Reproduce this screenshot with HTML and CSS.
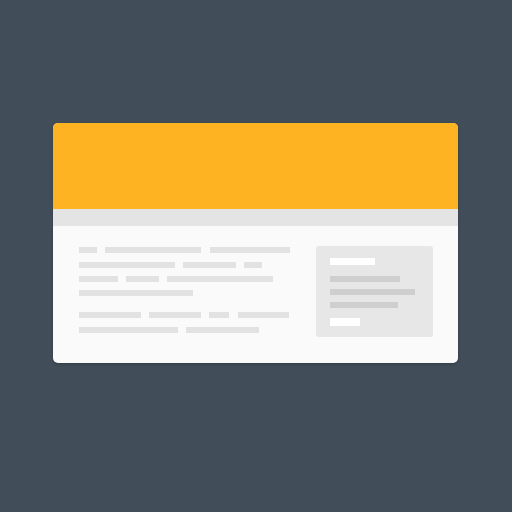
FILE: index.html
```html
<!DOCTYPE html>
<html>
<head>
<meta charset="utf-8">
<link rel="stylesheet" href="styles.css">
</head>
<body>
<div class="stage">
  <div class="card">
    <div class="header"></div>
    <div class="strip"></div>
    <div class="body">
      <div class="text">
        <div class="row"><span class="bar" style="width:17.4px"></span><span class="bar" style="width:96px"></span><span class="bar" style="width:80px"></span></div>
        <div class="row"><span class="bar" style="width:95.7px"></span><span class="bar" style="width:52.4px"></span><span class="bar" style="width:17.3px"></span></div>
        <div class="row"><span class="bar" style="width:38.7px"></span><span class="bar" style="width:32.3px"></span><span class="bar" style="width:105.6px"></span></div>
        <div class="row"><span class="bar" style="width:114px"></span></div>
        <div class="row para"><span class="bar" style="width:61.7px"></span><span class="bar" style="width:51.3px"></span><span class="bar" style="width:20px"></span><span class="bar" style="width:51.7px"></span></div>
        <div class="row"><span class="bar" style="width:98.4px"></span><span class="bar" style="width:72.7px"></span></div>
      </div>
      <div class="panel">
        <div class="pbar white" style="width:44.3px"></div>
        <div class="pbar gray first" style="width:70px"></div>
        <div class="pbar gray" style="width:84.3px"></div>
        <div class="pbar gray" style="width:67.3px"></div>
        <div class="pbar white last" style="width:29.3px"></div>
      </div>
    </div>
  </div>
</div>
</body>
</html>
```
FILE: styles.css
```css
html, body {
  margin: 0;
  padding: 0;
  background: #414d59;
  width: 512px;
  height: 512px;
  overflow: hidden;
}
.stage {
  width: 512px;
  height: 512px;
  padding: 123px 0 0 53px;
  box-sizing: border-box;
}
.card {
  width: 405px;
  height: 240px;
  border-radius: 5px;
  overflow: hidden;
  background: #fafafa;
  display: flex;
  flex-direction: column;
  box-shadow: 0 1px 3px rgba(0,0,0,0.25);
}
.header {
  height: 85.5px;
  background: #fdb322;
}
.strip {
  height: 17.5px;
  background: #e4e4e4;
}
.body {
  flex: 1;
  display: flex;
  justify-content: space-between;
  padding: 20px 25px 0 26.3px;
}
.text {
  display: flex;
  flex-direction: column;
  padding-top: 1.3px;
}
.row {
  display: flex;
  gap: 8.5px;
  height: 6px;
  margin-bottom: 8.3px;
}
.row.para {
  margin-top: 8px;
}
.bar {
  display: block;
  height: 6px;
  background: #e2e2e2;
}
.panel {
  width: 117.3px;
  height: 90.7px;
  background: #e7e7e7;
  border-radius: 3px;
  box-sizing: border-box;
  padding: 11.7px 0 0 14.7px;
  display: flex;
  flex-direction: column;
}
.pbar {
  height: 6px;
  margin-bottom: 7.3px;
}
.pbar.white {
  background: #ffffff;
  height: 7px;
}
.pbar.gray {
  background: #cfcfcf;
}
.pbar.first {
  margin-top: 3.6px;
}
.pbar.last {
  margin-top: 2.7px;
  height: 7.7px;
}
```
